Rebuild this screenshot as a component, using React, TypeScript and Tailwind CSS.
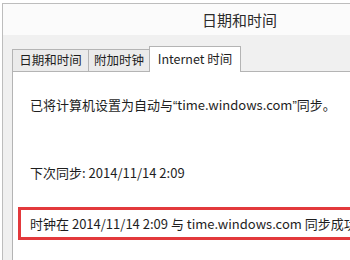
import React from "react";

const font = "font-['Noto_Sans_CJK_SC','Liberation_Sans',sans-serif]";
const quote = "font-['Liberation_Sans',sans-serif]";

const tabs = [
  { label: "日期和时间", width: "w-[76px]" },
  { label: "附加时钟", width: "w-[61px]" },
];

export default function App() {
  return (
    <div className={`w-[350px] h-[260px] overflow-hidden bg-white ${font}`}>
      <div className="ml-[2px] mt-[3px] w-[474px] h-[300px] border-l border-t border-[#bdbdbd] bg-[#f0f0f0]">
        {/* title bar */}
        <div className="h-[31px] bg-[#fbfbfb] flex items-center justify-center text-[15px] text-[#2b2b2b] leading-none">
          日期和时间
        </div>

        <div className="pl-[9px] pt-[11px]">
          {/* tabs */}
          <div className="flex items-end h-[25px]">
            {tabs.map((t) => (
              <div
                key={t.label}
                className={`${t.width} h-[22px] border border-b-0 border-r-0 border-[#b4b4b4] bg-[#ebebeb] flex items-center justify-center text-[12.5px] text-[#1e1e1e] leading-none`}
              >
                {t.label}
              </div>
            ))}
            <div className="w-[92px] h-[26px] -mb-px relative z-10 border border-b-0 border-[#b4b4b4] bg-white flex items-center justify-center text-[12.5px] text-[#1e1e1e] leading-none">
              Internet 时间
            </div>
          </div>

          {/* panel */}
          <div className="h-[240px] border border-[#b4b4b4] bg-white pl-[17px] pt-[26px] text-[13px] text-[#1e1e1e] leading-none whitespace-nowrap">
            <p>
              已将计算机设置为自动与<span className={quote}>“</span>time.windows.com
              <span className={quote}>”</span>同步。
            </p>
            <p className="mt-[54px]">下次同步: 2014/11/14 2:09</p>
            <div className="mt-[28px] -ml-[12px] w-[420px] h-[33px] border-[3px] border-[#e3393c] flex items-center pl-[9px]">
              时钟在 2014/11/14 2:09 与 time.windows.com 同步成功
            </div>
          </div>
        </div>
      </div>
    </div>
  );
}
